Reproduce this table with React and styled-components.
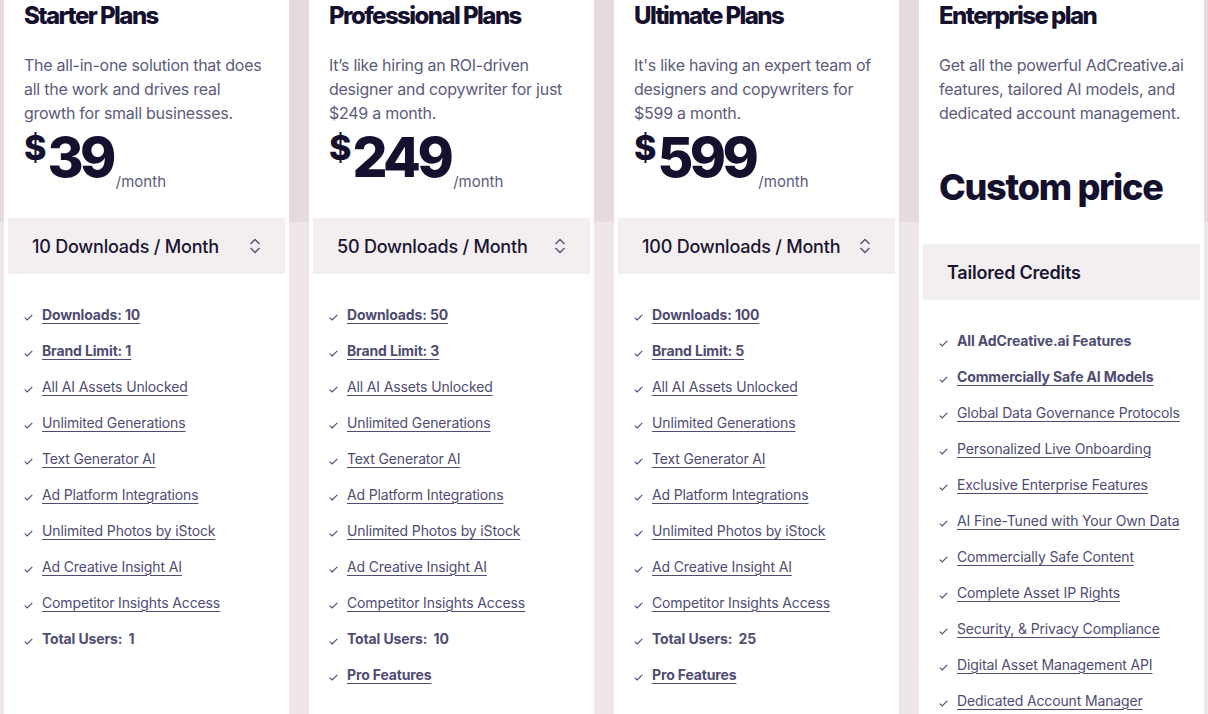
import React from "react";
import styled, { createGlobalStyle } from "styled-components";

const Global = createGlobalStyle`
  html, body {
    margin: 0;
    padding: 0;
    height: 100%;
    overflow: hidden;
  }
  body {
    font-family: Inter, "Noto Sans", sans-serif;
    background: linear-gradient(to bottom, #e5dadf 0, #e5dadf 222px, #eee6e9 222px, #eee6e9 100%);
  }
`;

const Grid = styled.div`
  display: grid;
  grid-template-columns: repeat(4, 285px);
  column-gap: 20px;
  padding-left: 4px;
  height: 714px;
`;

const Card = styled.div`
  background: #ffffff;
  padding: 0 20px;
  display: flex;
  flex-direction: column;
`;

const Title = styled.h2`
  margin: 1px 0 0;
  font-size: 24px;
  line-height: 30px;
  font-weight: 800;
  letter-spacing: -0.065em;
  color: #14102e;
`;

const Desc = styled.p`
  margin: 22px -3px 0 0;
  font-size: 16px;
  line-height: 24px;
  color: #5d5b7b;
  letter-spacing: -0.016em;
`;

const PriceRow = styled.div`
  display: flex;
  align-items: flex-start;
  margin-top: 3px;
  height: 58px;
  color: #14102e;
`;

const Dollar = styled.span`
  font-size: 34px;
  line-height: 34px;
  font-weight: 800;
  margin-top: 3px;
  margin-right: 1px;
`;

const Amount = styled.span`
  font-size: 55px;
  line-height: 58px;
  font-weight: 800;
  letter-spacing: -0.065em;
`;

const Per = styled.span`
  align-self: flex-end;
  margin: 0 0 -6px 3px;
  font-size: 15px;
  line-height: 20px;
  color: #5d5b7b;
`;

const Custom = styled.div`
  margin-top: 40px;
  font-size: 36px;
  line-height: 44px;
  font-weight: 800;
  letter-spacing: -0.035em;
  color: #14102e;
`;

const Select = styled.div`
  margin: ${(p) => (p.$enterprise ? "35px" : "32px")} -16px 0;
  height: 56px;
  background: #f3eff1;
  display: flex;
  align-items: center;
  justify-content: space-between;
  padding: 0 23px 0 24px;
  font-size: 18px;
  letter-spacing: -0.012em;
  font-weight: ${(p) => (p.$enterprise ? 600 : 500)};
  color: #1a1530;
`;

const List = styled.ul`
  list-style: none;
  margin: 0;
  padding: 22px 0 0;
`;

const Item = styled.li`
  display: flex;
  align-items: center;
  height: 36px;
  font-size: 14px;
  letter-spacing: -0.01em;
  color: #4f4c72;

  svg {
    flex: none;
    margin: 6px 9px 0 0;
  }
`;

const Label = styled.span`
  font-weight: ${(p) => (p.$bold ? 700 : 400)};
  text-decoration: ${(p) => (p.$plain ? "none" : "underline")};
  text-underline-offset: 3px;
  text-decoration-thickness: 1px;
  white-space: pre;
`;

const Check = () => (
  <svg width="9" height="7" viewBox="0 0 9 7">
    <path d="M0.7 3.6 L3.2 6 L8.3 0.8" fill="none" stroke="#4f4c72" strokeWidth="1.1" />
  </svg>
);

const Chevrons = () => (
  <svg width="14" height="18" viewBox="0 0 14 18">
    <path d="M2.5 7 L7 2.5 L11.5 7 M2.5 11 L7 15.5 L11.5 11" fill="none" stroke="#4f4c72" strokeWidth="1.3" />
  </svg>
);

const common = [
  "All AI Assets Unlocked",
  "Unlimited Generations",
  "Text Generator AI",
  "Ad Platform Integrations",
  "Unlimited Photos by iStock",
  "Ad Creative Insight AI",
  "Competitor Insights Access",
];

const feats = (dl, brand, users, pro) => {
  const list = [
    { t: `Downloads: ${dl}`, b: true },
    { t: `Brand Limit: ${brand}`, b: true },
    ...common.map((t) => ({ t })),
    { t: `Total Users:  ${users}`, b: true, plain: true },
  ];
  if (pro) list.push({ t: "Pro Features", b: true });
  return list;
};

const plans = [
  {
    title: "Starter Plans",
    desc: "The all-in-one solution that does all the work and drives real growth for small businesses.",
    price: "39",
    select: "10 Downloads / Month",
    features: feats(10, 1, 1, false),
  },
  {
    title: "Professional Plans",
    desc: "It’s like hiring an ROI-driven designer and copywriter for just $249 a month.",
    price: "249",
    select: "50 Downloads / Month",
    features: feats(50, 3, 10, true),
  },
  {
    title: "Ultimate Plans",
    desc: "It's like having an expert team of designers and copywriters for $599 a month.",
    price: "599",
    select: "100 Downloads / Month",
    features: feats(100, 5, 25, true),
  },
  {
    title: "Enterprise plan",
    desc: "Get all the powerful AdCreative.ai features, tailored AI models, and dedicated account management.",
    enterprise: true,
    select: "Tailored Credits",
    features: [
      { t: "All AdCreative.ai Features", b: true, plain: true },
      { t: "Commercially Safe AI Models", b: true },
      { t: "Global Data Governance Protocols" },
      { t: "Personalized Live Onboarding" },
      { t: "Exclusive Enterprise Features" },
      { t: "AI Fine-Tuned with Your Own Data" },
      { t: "Commercially Safe Content" },
      { t: "Complete Asset IP Rights" },
      { t: "Security, & Privacy Compliance" },
      { t: "Digital Asset Management API" },
      { t: "Dedicated Account Manager" },
    ],
  },
];

export default function App() {
  return (
    <>
      <Global />
      <Grid>
        {plans.map((p) => (
          <Card key={p.title}>
            <Title>{p.title}</Title>
            <Desc>{p.desc}</Desc>
            {p.enterprise ? (
              <Custom>Custom price</Custom>
            ) : (
              <PriceRow>
                <Dollar>$</Dollar>
                <Amount>{p.price}</Amount>
                <Per>/month</Per>
              </PriceRow>
            )}
            <Select $enterprise={p.enterprise}>
              <span>{p.select}</span>
              {!p.enterprise && <Chevrons />}
            </Select>
            <List>
              {p.features.map((f) => (
                <Item key={f.t}>
                  <Check />
                  <Label $bold={f.b} $plain={f.plain}>{f.t}</Label>
                </Item>
              ))}
            </List>
          </Card>
        ))}
      </Grid>
    </>
  );
}
